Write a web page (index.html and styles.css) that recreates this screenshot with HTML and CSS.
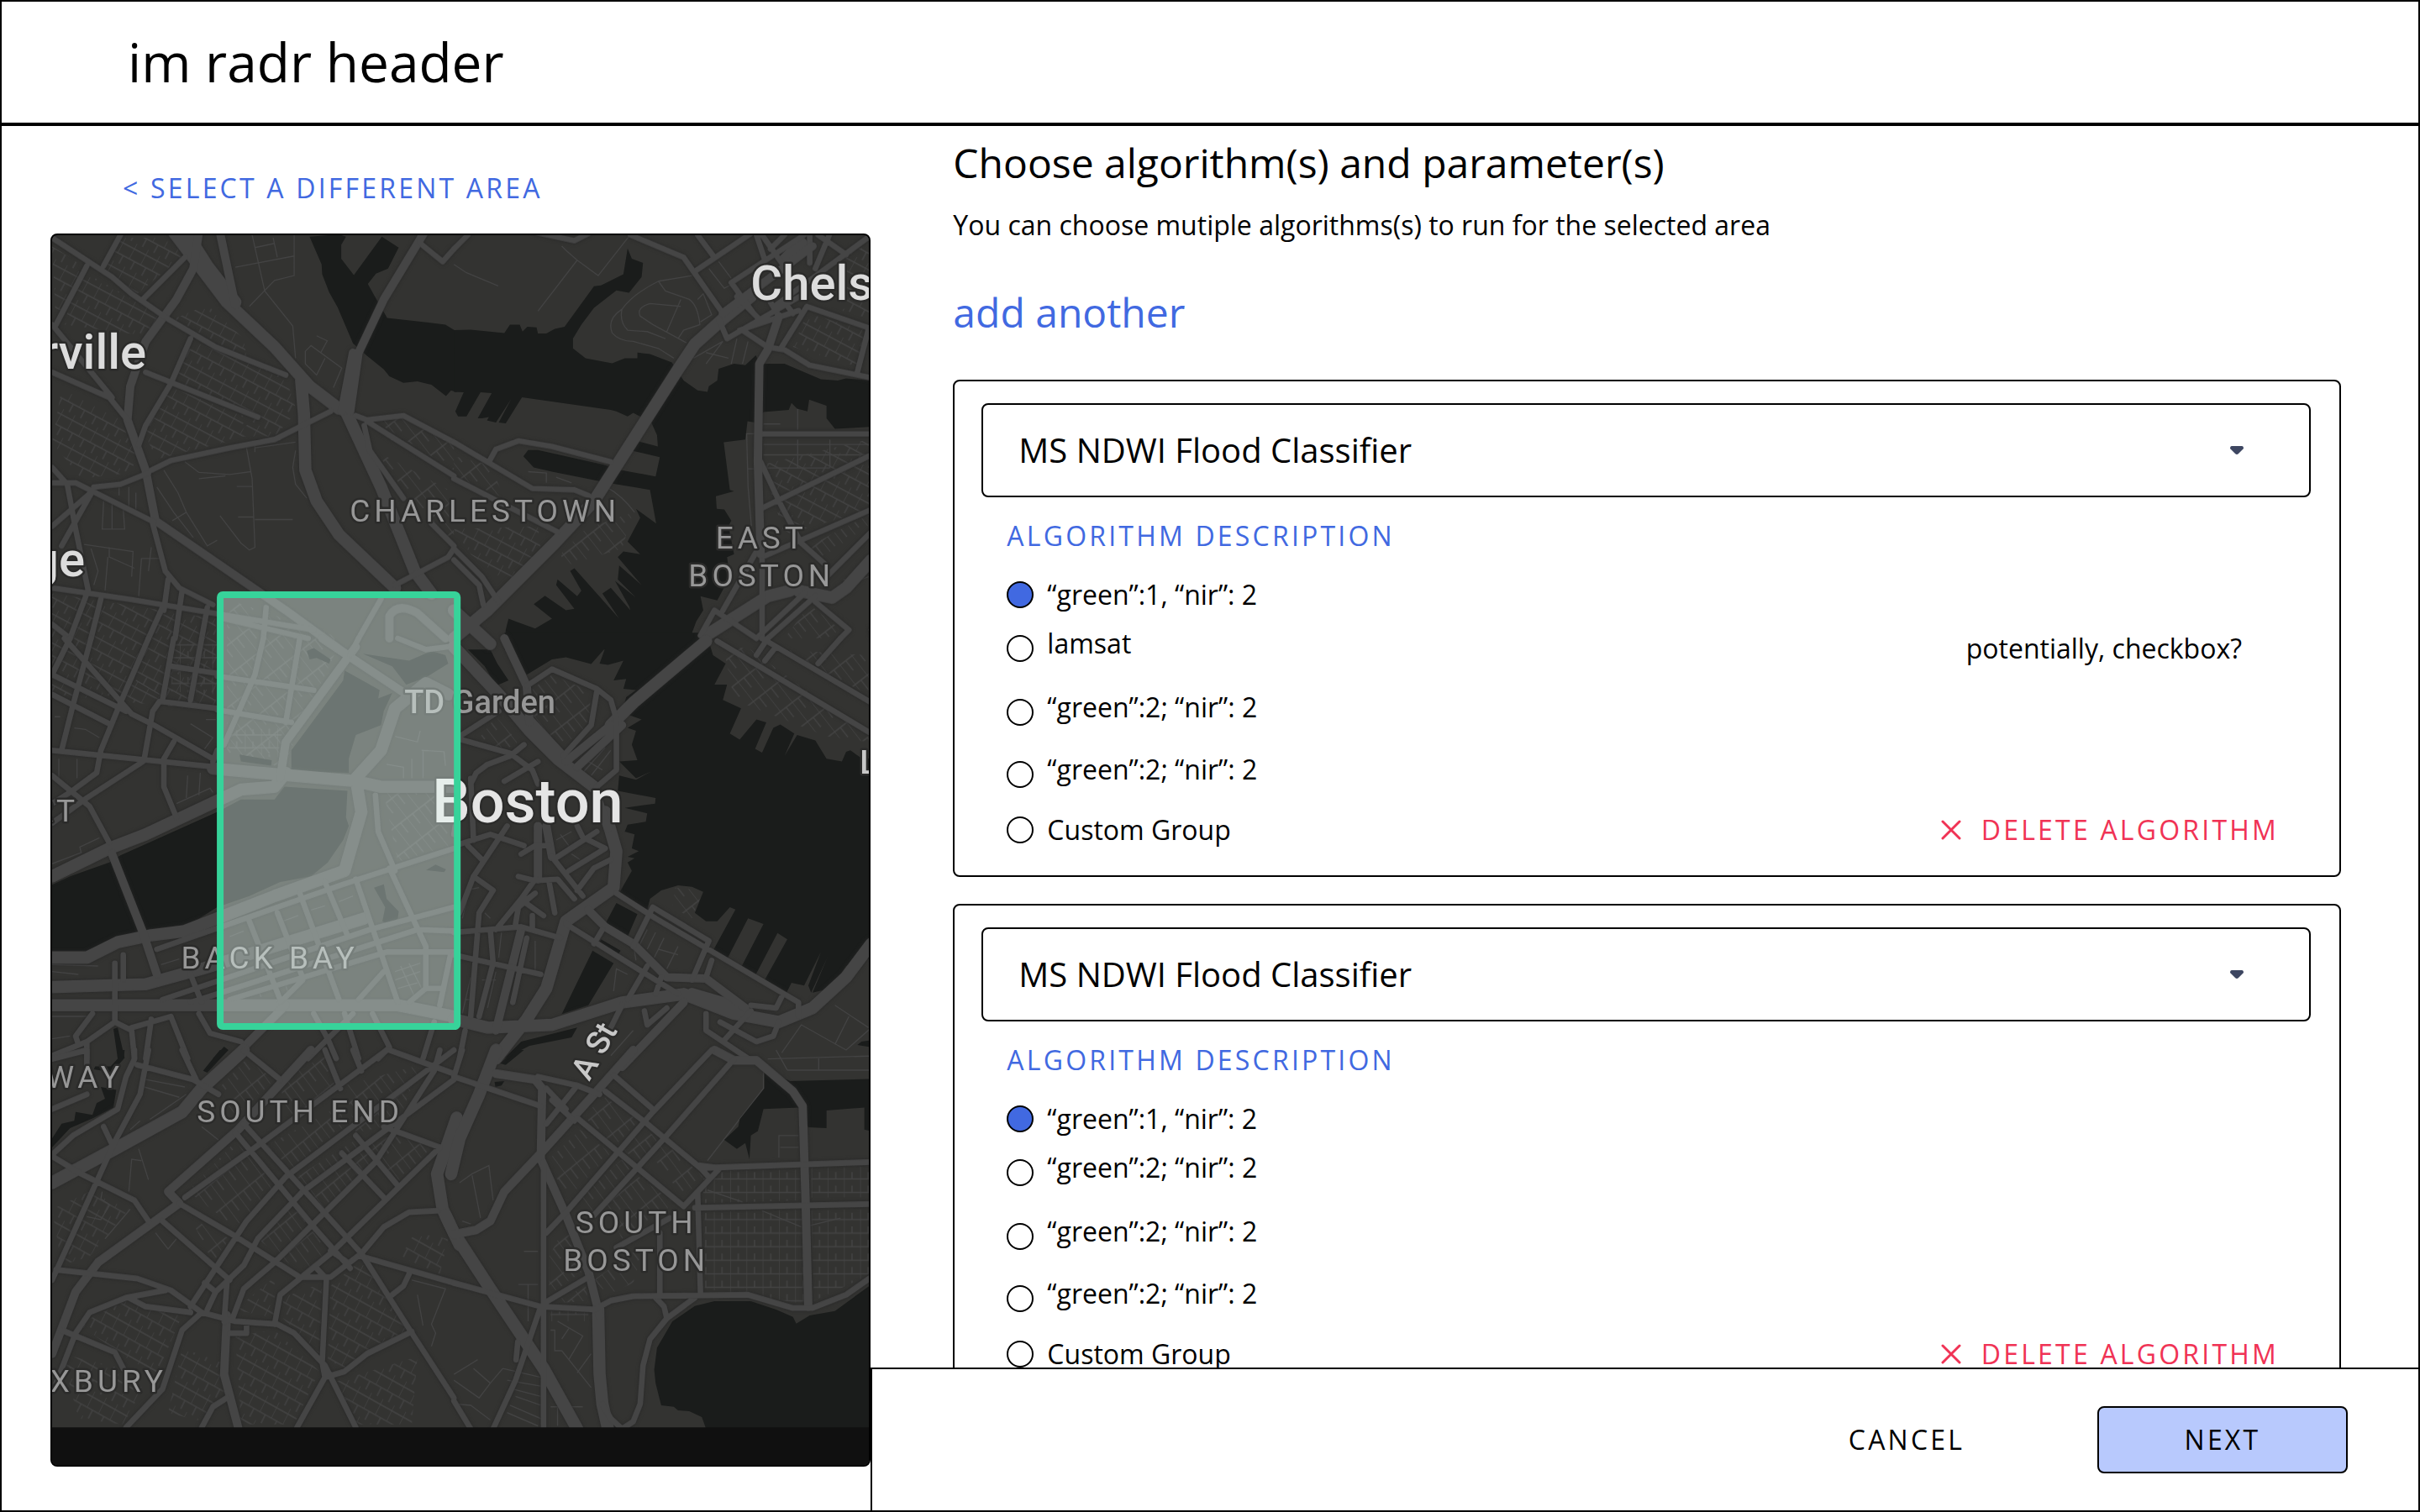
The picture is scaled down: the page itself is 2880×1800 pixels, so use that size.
FILE: index.html
```html
<!DOCTYPE html>
<html lang="en">
<head>
  <meta charset="UTF-8" />
  <meta name="viewport" content="width=device-width, initial-scale=1.0" />
  <title>im radr - choose algorithms</title>

  <link rel="stylesheet" href="styles.css">

</head>
<body>

<div class="page">
  <header class="header">
    <span class="header-title">im radr header</span>
  </header>

  <main class="main">
    <section class="area-panel">
      <a class="link back-link" href="#">&lt; SELECT A DIFFERENT AREA</a>

      <div class="map">
        <svg class="map-svg" viewBox="62 280 972 1464" preserveAspectRatio="xMidYMid slice" role="img" aria-label="Map of Boston with selected area">
          <defs>
            <pattern id="gridA" width="46" height="92" patternUnits="userSpaceOnUse" patternTransform="rotate(28)">
              <path class="minor" d="M0,0 V60 M0,60 H46 M23,60 V92 M0,20 H46" />
            </pattern>
            <pattern id="gridB" width="54" height="88" patternUnits="userSpaceOnUse" patternTransform="rotate(-38)">
              <path class="minor" d="M0,0 V88 M0,44 H54 M27,44 V88" />
            </pattern>
            <pattern id="gridC" width="58" height="46" patternUnits="userSpaceOnUse">
              <path class="minor" d="M0,0 V46 M0,23 H58 M29,0 V23" />
            </pattern>
          </defs>

          <rect class="land" x="62" y="280" width="972" height="1464" />

          <!-- side streets -->
          <g class="streets">
            <g transform="translate(40 260) scale(.3333)">
              <path fill="url(#gridA)" d="M66,100 L190,180 L80,380 Z M160,180 L460,350 L400,420 L110,380 Z M310,70 L460,70 L540,130 L370,270 L250,180 Z M500,360 L620,310 L750,430 L760,500 Z M570,440 L900,570 L940,690 L860,780 L720,780 L800,700 L490,580 Z M480,600 L760,710 L720,790 L440,860 L390,760 Z M100,610 L310,720 L370,860 L340,910 L170,930 L66,800 Z M66,1340 L650,1430 L650,1760 L66,1700 Z" />
              <path fill="url(#gridB)" d="M1210,720 L1330,710 L1500,810 L1500,900 Z M1220,830 L1500,980 L1500,1150 L1400,1080 Z M690,1360 L1100,1500 L890,1960 L690,1920 Z M1250,2050 L1480,2050 L1490,2240 L1300,2300 Z" />
              <path class="minor" d="M720,175 L930,135 M930,60 V205 L860,222 L770,315 M780,60 L825,260 L925,385 L935,500 M790,105 L860,90 M855,70 L870,140 M970,475 L990,455 L1100,535 L1070,605 M970,475 V520 L1010,560 L1040,500 M1010,420 L1048,438 L1025,480" />
              <path class="minor" d="M540,870 L590,908 L700,915 L775,905 M590,930 L685,920 M760,820 L780,930 L790,1175 L770,1185 L740,1160 L665,1062 M725,958 H780 M730,1067 H785 M790,1076 H925 M465,900 L515,980 L545,1050 L620,1170 L655,1150 M440,960 L500,1050 L570,1140 M545,1050 L495,1080 M790,820 L935,800 M790,835 V800" />
              <path class="minor" d="M180,1165 L355,1190 L350,1280 M270,1175 V1210 L360,1250 M265,1210 L255,1330 M205,1180 L230,1260 L215,1310 M420,1175 L410,1260 M385,1215 H450 M385,1215 L375,1350 M250,1010 L245,1110 L325,1110 L320,1040 M280,1010 V1110 M305,940 V990 M340,960 V1030 M365,980 V1040 M935,830 L925,890 L935,950 L975,1000" />
            </g>
            <g transform="translate(540 260) scale(.3333)">
              <path fill="url(#gridA)" d="M1260,340 L1470,400 L1440,530 L1210,460 Z M1100,880 L1480,790 L1490,1040 L1180,1130 Z M0,1110 L300,1100 L310,1180 L200,1310 L60,1200 Z M1380,120 L1490,100 L1490,360 L1380,330 Z" />
              <path fill="url(#gridB)" d="M380,1200 L470,1110 L640,1050 L600,1180 L400,1240 Z M1250,1180 L1480,1060 L1490,1090 L1300,1220 Z M1180,1500 L1270,1380 L1380,1470 L1330,1500 Z M0,850 L130,880 L180,1000 L0,920 Z" />
              <path class="minor" d="M385,100 L400,115 L440,150 L515,205 L625,65 M440,150 L300,332 M0,165 L45,195 L158,242 M600,325 Q640,270 730,225 L850,205 M730,225 L755,260 L840,290 Q870,310 878,380 L820,400 L800,430 M600,325 Q590,370 620,400 L690,405 L755,430 M600,325 Q545,360 565,410 Q590,440 640,440 L730,465 L785,500 M810,290 L760,405 M810,315 L700,305 Q650,320 665,350 L710,380 L830,445 M855,500 L960,440 L900,520 M900,480 L980,500 M1010,430 L990,520 M1050,440 L1030,520 M910,180 L965,250 L985,240 M945,155 L990,215 M870,290 L890,270 L920,345 L880,370" />
              <path class="minor" d="M1105,735 H1165 M1227,680 V755 M1227,790 V890 M1342,790 V890 M1105,808 H1490 M1105,845 H1490 M1105,892 H1342 M1040,770 H1075 M1045,770 L1050,960 L1062,1100 M1048,895 H1070 M265,905 L330,910 V945 M365,925 L420,945 M545,960 Q600,990 645,1050 M1390,1290 Q1440,1300 1480,1280" />
            </g>
            <g transform="translate(40 760) scale(.3333)">
              <path fill="url(#gridC)" d="M500,20 L655,20 L655,200 L490,190 Z M690,330 L890,320 L870,430 L690,390 Z" />
              <path class="minor" d="M75,280 H95 M90,430 V510 M155,430 V500 M145,320 L185,325 L235,355 M560,305 L640,355 L610,395 M615,290 H650 M365,150 L450,200 M550,490 L545,570 M595,480 L590,560 M510,590 L630,535 L640,550 M66,805 L170,765 L165,745 L235,712 M605,970 L640,940 L720,915 L880,855 L960,830 L1035,770 M1290,350 L1370,370 L1380,330 M1390,400 V500 M1385,400 L1465,405 L1470,455 M1260,450 L1320,460 V500 M1350,430 V500" />
              <path class="minor" d="M890,1010 L945,990 M990,970 L1040,955 M1090,940 L1140,920 M700,1065 L750,1045 M455,1165 L520,1145 M800,1250 L812,1280 M900,1240 L910,1270 M1290,1190 L1380,1160 M1290,1220 L1380,1190 M1300,1250 L1370,1230 M1310,1170 L1360,1280 M1340,1160 L1385,1250 M66,1165 L230,1170 M66,1190 L160,1200 M66,1350 L200,1350 M66,1430 L130,1420" />
            </g>
            <g transform="translate(540 760) scale(.3333)">
              <path fill="url(#gridB)" d="M280,180 L350,130 L490,190 L480,310 L370,400 L280,320 Z M960,20 L1060,40 L1480,350 L1480,370 L1330,350 L1000,220 Z M80,370 L150,280 L230,370 L180,400 Z M1150,40 L1480,60 L1480,200 Z M790,890 L890,900 L850,1000 L780,960 Z" />
              <path class="minor" d="M460,480 L540,390 M490,490 L560,400 M480,440 L530,470 M380,700 L410,740 M365,720 L420,690 M420,770 L450,790 M650,1150 L640,1090 M690,1040 L660,1100 M720,1050 L690,1110 M750,1070 L715,1140 M800,1100 L760,1180 M730,1110 L800,1130 M60,880 L30,1000 M40,900 L90,890 M110,980 L130,1000 M170,1050 L160,1140 M290,1080 V1190 M60,1210 L30,1340 M150,1190 L120,1320 M100,1220 H150 M40,1290 H60 M570,1260 L580,1180 L620,1200 M560,1490 L640,1400 M1170,1480 L1240,1380 L1400,1470 L1490,1390 M1360,1310 L1480,1390 M1410,1350 L1360,1450" />
            </g>
            <g transform="translate(40 1250) scale(.3333 .3508)">
              <path fill="url(#gridB)" d="M660,130 L760,30 L860,100 L720,230 Z M880,100 L1040,20 L1080,130 L900,240 Z M820,330 L1090,190 L1110,260 L930,400 Z M940,430 L1140,310 L1230,380 L1040,540 Z M1110,120 L1380,50 L1300,250 L1150,280 Z M550,480 L720,310 L870,460 L720,600 Z M800,640 L930,520 L1050,680 L960,760 Z M1170,310 L1310,290 L1420,330 L1300,450 Z M560,570 L700,640 L640,720 Z" />
              <path fill="url(#gridA)" d="M66,540 L200,480 L340,540 L200,700 L100,730 Z M160,930 L330,850 L530,900 L440,1100 L340,1050 Z M720,880 L860,770 L860,910 Z M890,840 L1030,790 L1020,1030 L890,910 Z M1060,800 L1170,710 L1340,950 L1110,1080 L1050,1050 Z M1310,700 L1360,620 L1480,640 L1450,760 Z M530,1010 L670,1060 L690,1170 L600,1260 L480,1230 Z M720,970 L860,950 L1020,1090 L930,1270 L740,1270 Z M1060,1130 L1370,1040 L1350,1270 L1150,1270 Z M100,1030 L310,1080 L400,1130 L320,1270 L160,1250 Z" />
              <path class="minor" d="M340,480 L350,370 L385,375 M375,335 L410,440 M435,620 L480,675 L510,640 M245,480 L240,505 L272,525 L240,575 L190,565 M345,540 L255,640 M400,100 L540,125 M395,125 L520,160 M415,235 L545,150 M345,270 L380,240 M1350,780 L1470,810 L1420,930 L1435,960 L1420,1005 M1370,830 L1390,935 M600,260 L660,305" />
            </g>
            <g transform="translate(540 1250) scale(.3333 .3508)">
              <path fill="url(#gridC)" d="M890,410 L1235,405 L1240,510 L890,520 Z M895,550 L1245,540 L1250,860 L895,810 Z M1275,400 L1490,395 V500 H1275 Z M1275,545 L1490,540 V760 L1285,850 Z M345,885 L480,890 V920 H345 Z" />
              <path fill="url(#gridB)" d="M460,220 L540,160 L660,240 L570,330 Z M340,370 L450,270 L560,350 L400,510 Z M440,510 L600,370 L640,420 L500,560 Z M540,520 L660,430 L790,520 L600,640 Z M700,350 L750,310 L890,430 L820,500 Z M340,700 L400,590 L460,750 L340,830 Z M500,780 L680,660 L640,790 L550,830 Z M600,330 L680,270 L730,300 L660,390 Z M345,860 L470,800 L480,850 Z" />
              <path class="minor" d="M20,450 L65,420 L125,392 L140,510 M65,425 L95,570 M30,580 L60,590 M250,683 H300 M230,795 H300 M265,795 V920 M345,950 H360 V1020 H385 M370,920 L460,970 L410,1050 M385,1020 L490,1145 M385,980 L410,945 M440,1095 L490,1030 M0,1100 L85,1050 M0,1120 L90,1180 L130,1130 L70,1080 M175,1080 L130,1130 M175,1080 L310,1110 M190,1120 L310,1140 M210,1150 L310,1175 M220,1175 L310,1205 M200,1205 L310,1250 M190,1230 L300,1275 M0,1200 L60,1205 L130,1255 M370,1210 V1275 M345,1210 H460 M1105,75 V130 L905,375 M1160,365 V290 H1230 M1165,330 H1230 M1120,30 L1490,20 M1190,68 H1490 M1302,25 V68 M1150,0 L1190,68 M905,475 L1030,515 M1100,545 L1240,600 M1250,600 L1380,570" />
            </g>
          </g>

          <!-- water -->
          <g class="water">
            <path transform="translate(40 260) scale(.3333)" d="M985,66 L1090,58 L1115,66 L1098,95 V145 L1143,203 L1243,66 L1303,105 L1265,180 L1222,198 L1193,235 L1218,280 L1262,356 L1470,380 L1510,405 V622 L1490,615 L1472,635 L1420,595 L1370,583 L1320,588 L1270,565 L1250,540 L1188,490 L1140,447 L1085,318 L1055,265 L1030,200 L1028,165 Z" />
            <path transform="translate(540 260) scale(.3333)" d="M0,400 L60,398 L180,410 L200,380 H235 L245,405 L262,388 L295,390 L300,412 H330 L360,395 L395,388 L500,243 L525,240 L605,200 L620,108 L635,145 L675,160 L670,210 L625,266 L580,258 L500,320 L455,380 L425,430 V465 L470,500 L565,518 L610,500 H655 V480 L700,485 L778,515 L820,580 L870,615 L905,620 L910,600 L940,580 L945,538 L1000,520 L1040,525 L1078,490 L1090,520 H1180 L1310,575 L1370,580 L1400,572 L1490,580 V745 L1360,752 L1330,715 V670 L1268,648 L1262,690 L1225,680 L1205,660 L1195,685 L1105,692 L1075,730 L1048,725 L1040,790 L963,800 L985,970 L1000,975 L935,993 L938,1038 L965,1040 L990,1080 L980,1100 L1000,1200 L975,1210 L985,1280 L940,1365 L880,1350 L890,1400 L865,1440 L850,1480 L900,1540 H180 L185,1470 L195,1430 L220,1440 L290,1465 L350,1430 L285,1378 L325,1348 L400,1400 L430,1395 L365,1310 L370,1290 L440,1350 L455,1330 L415,1260 L430,1250 L590,1430 L530,1340 L560,1320 L630,1400 L625,1385 L575,1295 L650,1355 L585,1290 L590,1240 L670,1310 L585,1210 L605,1190 L665,1200 L620,1155 L665,1070 L650,1038 L722,1090 L700,970 L580,950 L500,935 L350,905 L285,890 L248,850 L265,828 L300,828 L535,880 L590,898 L720,922 L735,853 L635,830 L650,795 L728,815 L725,775 L705,730 L640,695 L620,708 L580,690 L560,685 L243,640 L185,733 L160,730 L205,645 L150,730 L118,722 L125,710 L100,715 L85,715 L135,625 L95,622 L45,708 L15,708 L5,690 L35,622 L0,620 Z" />
            <path transform="translate(40 760) scale(.3333)" d="M66,880 L130,850 L270,800 L310,775 L655,620 L740,575 H860 L895,530 L1120,545 L1115,640 L1125,670 L1105,720 L1050,800 L990,850 L880,870 L770,920 L655,960 L560,1020 L400,1045 L290,1075 L190,1115 H66 Z M920,400 L1105,150 L1110,115 L1235,185 L1230,215 L1280,195 L1250,260 L1240,310 L1150,345 L1125,430 V480 L920,475 Z M1175,55 L1280,100 L1330,165 L1400,140 L1480,90 L1470,60 L1420,45 L1340,80 Z M975,45 L1000,35 L1060,75 L1055,90 L1010,70 L985,75 Z M735,415 L850,435 L848,455 L740,440 Z M1215,890 L1250,878 L1260,930 L1303,975 L1300,1000 L1275,1025 L1245,1010 L1255,960 Z M1400,828 L1435,808 L1472,825 L1465,835 Z M285,1395 L300,1390 L325,1500 H300 Z M640,1500 L680,1458 L695,1470 L665,1500 Z" />
            <path transform="translate(540 760) scale(.3333)" d="M180,-20 L260,130 L350,75 L400,68 L490,92 L540,35 L520,90 L550,95 L605,80 L570,150 L615,145 L605,180 L650,185 L615,210 L600,265 L670,290 L620,320 L650,330 L635,380 L655,435 L590,440 L650,500 L705,475 L650,505 L590,490 L585,545 L720,570 L718,590 L610,605 L690,625 L685,655 L620,665 L610,690 L645,700 L635,750 L660,760 L620,780 L645,785 L620,800 L635,830 L590,910 L690,970 L700,930 L740,900 L800,882 L850,887 L890,905 L860,980 L900,1010 L940,1010 L985,960 L1005,968 L925,1115 L970,1155 L1050,1000 L1105,1020 L1020,1185 L1075,1205 L1155,1052 L1190,1075 L1105,1228 L1185,1270 L1205,1230 L1250,1240 L1310,1120 L1265,1240 L1275,1265 L1335,1135 L1280,1265 L1345,1250 L1400,1170 L1490,1140 V430 L1450,425 L1415,400 L1400,405 L1385,440 L1330,430 L1290,365 L1225,345 L1180,420 L1215,340 L1165,308 L1140,320 L1100,408 L1075,395 L1115,300 L1080,290 L1020,362 L985,340 L1025,250 L960,220 L975,165 L930,165 L970,90 L925,60 L900,-20 Z M50,40 H130 L155,90 L195,150 L150,170 L110,100 Z M580,945 L655,985 L620,1065 L540,1020 Z M525,1075 L595,1115 L585,1130 L515,1095 Z M495,1115 L570,1160 L480,1310 L385,1342 Z M240,1440 L440,1390 L420,1425 L270,1455 L180,1500 Z M1490,1435 V1460 L1440,1452 L1455,1440 Z" />
            <path transform="translate(40 1250) scale(.3333 .3508)" d="M605,70 L665,0 H695 L620,77 Z M305,0 H325 L322,30 L280,75 L215,65 L220,55 L275,55 L300,30 Z M240,125 L295,135 L285,195 L215,230 L130,265 L66,330 V300 L100,250 L145,240 L150,210 L180,215 L210,220 L225,180 L255,165 Z" />
            <path transform="translate(540 1250) scale(.3333 .3508)" d="M250,0 L185,50 L165,45 L215,0 Z M145,108 L180,105 L170,120 L148,125 Z M1108,75 L1130,75 L1200,105 L1490,98 V275 L1465,270 V195 L1330,205 V265 L1265,262 L1230,195 L1105,200 L1085,275 L1060,290 L1055,370 L1040,315 L1010,335 L965,305 L1015,260 L1020,235 L1108,130 Z M900,1285 L885,1245 L840,1225 L800,1222 L785,1210 L740,1205 L720,1130 L715,1085 L725,1010 L780,920 L860,868 L930,852 H1060 L1150,880 L1210,905 L1222,928 L1270,900 L1360,885 L1490,795 V1285 Z" />
          </g>

          <!-- main roads -->
          <g class="roads">
            <g transform="translate(40 260) scale(.3333)">
              <path class="r1" d="M500,50 L690,300 L860,460 L985,600 L1090,680 M550,60 L620,170 L720,300 M1110,680 L1240,960 L1360,1260 L1420,1340 M955,580 L965,700 L970,900 L1010,1010 L1090,1130 L1290,1320" />
              <path class="r2" d="M590,50 L570,180 L510,290 L400,440 L345,600 L335,720 L400,900 L435,1080 L900,1400 L1120,1560 M1395,50 L1250,290 L1160,480 L1130,690 M1140,480 L1100,690 M665,50 L705,240 L720,310" />
              <path class="r3" d="M66,70 L280,210 L350,270 L480,360 L650,460 L900,560 M66,550 L270,640 L335,720 M400,550 L800,710 M560,430 L490,590 L400,740 L375,810 M540,140 L390,290 M310,60 L250,170 M190,170 L80,380 M66,380 L280,640 M420,900 L490,865 L700,820 L860,790 L1060,690 M66,945 H150 L430,1085 M215,960 L310,950 L410,910 M66,890 L120,950 L150,1110 L195,1330 M66,1100 L210,975 L100,1170 M425,1090 L470,1260 L520,1320 L640,1380 M66,1320 L340,1360 L1000,1470 M480,1290 L465,1400 M530,1330 L505,1500 M620,1390 L600,1500 M240,1360 L205,1500 M190,1340 L130,1500 M460,1390 L410,1500 M66,1450 L130,1500 M1150,705 L1190,720 L1320,705 L1500,800 M1190,725 L1500,920 M1180,740 L1200,830 L1320,1000 M1290,1310 L1480,1210 L1500,1180 M1420,1090 L1500,1170 M1380,60 L1380,90 L1460,155 L1500,110 M680,1430 L980,1500 M830,1390 L820,1500 M1240,1360 L1160,1500" />
              <path class="r2" d="M1270,1500 V1420 Q1300,1370 1370,1410 L1470,1500" />
            </g>
            <g transform="translate(540 260) scale(.3333)">
              <path class="r1" d="M1240,90 L1180,150 M1060,280 L960,360 L860,450 L800,540 L500,1010 L360,1160 L120,1400 L0,1500 M0,1400 L130,1520 M900,1490 L1120,1350 L1200,1330 M1230,1330 L1350,1355 L1400,1320 L1490,1220" />
              <path class="r3" d="M0,110 L50,60 M290,50 L430,80 L480,55 M630,60 L820,140 L960,340 M870,60 L930,140 M860,190 L1060,55 M1080,60 L1110,150 M1100,60 L1170,160 M1180,60 L1130,110 M990,230 L1250,60 M990,230 L1070,340 M1490,60 L1150,310 M1300,60 L1400,130 M1340,60 L1290,180 M1270,60 V160 M1010,280 L1060,330 L1090,360 M945,360 L975,430 L1250,270 M1020,400 L1230,330 M1130,300 L1160,350 M1180,300 L1210,340 M1030,400 L1120,460 L1180,470 L1270,525 L1490,570 M1170,460 L1260,315 L1490,395 M1480,395 L1440,550 M1095,770 H1490 M1095,870 L1170,1030 L1240,1160 L1330,1240 M1090,1040 L1490,845 M1100,1210 L1490,1040 M0,800 L280,965 L430,970 L480,990 M125,870 L150,825 L230,795 L350,815 L560,870 M0,930 L370,1120 M0,1180 L100,1280 L160,1370 M0,1220 L90,1310 L105,1380 M1290,1370 L1410,1470 L1380,1500 M1290,1350 L1120,1500 M1250,1340 L1080,1500 M1080,1190 L960,1400 M1100,1200 V1500 M1490,1470 L1500,1500 M930,1400 L880,1490 M930,1400 L1080,1500 M1330,1280 L1490,1120" />
              <path class="r2" d="M1160,350 L1120,470 L1090,520 L1085,870 L1095,1200 M1280,100 L960,340" />
            </g>
            <g transform="translate(40 760) scale(.3333)">
              <path class="r1" d="M66,850 L270,750 L400,700 L655,580 L740,540 L860,530 L900,480 M640,465 L1150,510 L1240,530 H1500 M66,1140 H190 L300,1085 L420,1060 L540,1045 L860,920 L1110,830 L1170,620 L1150,500 L1240,400 L1290,250 L1400,160 L1480,200 M66,1245 L400,1235 L600,1180 L1180,1000 M66,1310 H1300 L1500,1350" />
              <path class="r2" d="M1150,30 L900,370 L880,500 M1030,0 L1330,200 M900,1310 L640,1570 M280,770 L390,1050 L440,1200" />
              <path class="r3" d="M110,0 L350,270 L430,310 L640,430 M66,130 L330,260 M66,200 L270,305 M130,0 L66,130 M410,0 L310,230 L240,400 L225,480 L130,550 L66,590 M205,0 L140,240 L100,400 M66,400 L655,460 M390,440 L190,570 L66,660 M66,490 L200,600 L270,730 M500,0 L460,220 M600,0 L560,220 M495,100 L655,125 M655,250 L450,225 L425,260 L395,430 M500,370 L465,430 V530 L510,640 M655,400 L640,440 M950,0 L900,300 M820,0 L790,130 L680,380 M655,135 L1000,185 M655,255 L920,300 M1160,0 L1130,60 M1300,0 L1400,40 L1480,30" />
              <path class="r3" d="M440,1110 L1100,880 L1500,750 M460,1290 L1200,1040 L1500,960 M560,1300 L1370,1040 L1500,1045 M700,1290 L1260,1120 L1500,1120 M770,1010 L880,1290 M870,980 L960,1210 M950,910 L1090,1290 M1150,860 L1300,1300 M1040,870 L1120,1060 M560,1200 L600,1300 M1270,820 L1400,1100 V1250 L1340,1300 M1400,1250 H1460 M1220,560 L1230,690 L1290,830 M1490,1120 L1450,1310 M960,1220 L880,1300 M1250,1190 L1160,1290 M210,1340 L150,1420 L160,1450 M66,1490 L190,1440 L290,1370 L350,1400 L360,1500 M290,1160 V1370 M320,1130 V1220 M190,1440 V1500 M350,1390 L490,1350 L550,1500 M590,1340 L630,1410 L740,1440 M420,1360 L400,1500 M1000,1340 L1050,1430 L1080,1500 M1110,1340 L1160,1500 M1210,1340 L1270,1460 L1230,1500 M980,1500 L1140,1340 M1430,1370 L1390,1500" />
            </g>
            <g transform="translate(540 760) scale(.3333)">
              <path class="r1" d="M0,30 L160,200 L270,330 L370,430 L500,530 M540,620 L580,760 L570,890 L400,1010 L330,1250 L260,1360 L150,1500 M900,10 L640,230 L560,310 M0,1360 L120,1390 L350,1380 L600,1300 L820,1270 L1000,1340 L1160,1370 L1280,1320 L1400,1210 L1490,1090 M850,1270 L1020,1320 M270,300 L400,440" />
              <path class="r2" d="M180,0 L260,170 L270,300 M500,530 L550,680 M560,310 L400,440 M600,310 L440,460 M480,970 L540,1030 L640,1090 L760,1210 L900,1215 L1040,1320 M820,1300 L600,1530 M240,1040 L200,1200 L150,1400 M300,670 V860 M330,670 L350,780" />
              <path class="r3" d="M260,170 L350,110 L510,180 L560,220 L580,290 V470 L510,530 M510,190 L490,310 L390,420 M20,350 L160,260 M20,360 L200,410 L280,470 L300,520 M60,520 L80,480 L120,450 L200,420 L250,380 M180,510 L300,440 M60,500 L70,720 M20,735 L130,700 L250,740 M20,570 L0,700 M50,740 L100,790 M190,670 L70,850 L140,900 L90,980 L60,1350 M290,860 L240,930 L150,1040 M350,780 L460,920 M240,770 L290,740 H340 M370,780 L510,690 M230,850 L290,865 L370,860 L430,930 M410,830 L540,750 M440,900 L500,820 L560,790 M440,670 L460,710 L540,750 M340,870 L360,980 M220,1020 L230,960 L290,910 L250,940 L320,990 M0,1050 L240,1030 L380,1070 M0,1130 L310,1200 M280,990 V1040 M130,1040 L140,1160 L90,1350 M260,1070 L210,1300 M70,850 L20,980 M40,1400 L20,1500 M580,910 L720,1000 L1230,1300 L1230,1350 M400,1020 L640,1170 L800,1270 M640,1100 L710,960 L910,1080 L850,1220 M530,1040 L500,1090 M690,1170 L620,1290 M740,1210 L720,1270 M920,1150 L900,1210 M900,1340 V1400 L1050,1500 M960,1440 L1060,1330 M560,1390 L600,1310 M680,1330 L690,1380 L760,1320 M1160,1370 L1140,1420 L1080,1440 L950,1370 M1060,1310 L1150,1320 L1170,1280 M940,10 L1490,340 M1100,0 L1490,230 M1080,60 L1120,0 M1110,80 L1150,30 M1300,90 L1380,0" />
            </g>
            <g transform="translate(40 1250) scale(.3333 .3508)">
              <path class="r1" d="M750,0 L600,130 L530,210 L300,330 L66,450 M1510,230 L1440,420 L1460,540 L1520,660" />
              <path class="r2" d="M990,0 L730,270 L480,480 L520,520 L230,720 L150,820 L66,1030 M690,900 L680,1100 L730,1280" />
              <path class="r3" d="M66,30 L190,0 M190,0 V50 M66,200 L190,150 M60,360 L140,290 L300,200 L330,90 L360,30 V0 M410,0 L380,150 L290,310 L66,780 M530,0 L580,100 M370,50 L570,100 L660,150 M250,260 L280,320 M66,360 L170,420 L360,510 L410,580 M750,0 L880,100 M1040,0 L1095,130 M1140,0 L1170,70 M1260,0 L820,310 L540,500 M720,280 L1000,600 L1130,740 M1150,290 L1300,460 M1100,350 L1250,500 M1500,0 L900,430 L760,580 L560,870 M1500,100 L960,480 L800,640 L750,730 L650,820 L620,880 M1450,0 L1430,70 L1220,380 L860,720 L750,810 L710,910 M1450,330 L1060,690 L880,830 L860,930 M1270,0 L1500,80 M1250,260 L1450,330 M520,520 L700,620 L950,770 H1060 L1170,690 L1250,600 L1340,550 L1440,545 M460,580 L700,780 M610,790 L650,820 M80,745 L370,775 L490,815 L600,890 L720,920 L870,930 L930,960 L1040,1070 L1150,1280 M150,960 L200,890 L330,840 L470,815 M340,840 L400,870 L560,890 M100,950 L290,1025 L320,1080 M150,960 L80,1130 M600,890 L530,950 L460,1150 L330,1280 M690,790 L680,920 M700,960 H760 V930 M690,1180 L640,1210 L600,1280 M1045,780 L1030,1060 L1040,1110 L1110,1090 L1190,1030 L1350,955 M1040,1110 L940,1280 M1170,700 L1500,790 M1340,760 L1320,800 L1280,830 M1010,740 L1040,770 M1060,680 L1120,720" />
              <path class="r3" d="M750,250 L1170,690 L1350,960 L1500,1180" />
            </g>
            <g transform="translate(540 1250) scale(.3333 .3508)">
              <path class="r1" d="M150,0 L90,150 L20,300 L-10,420 M-30,560 L0,620 L130,810 L320,1080 L440,1285 M515,880 L520,1100 L530,1200 L550,1285" />
              <path class="r2" d="M150,80 L290,100 L315,130 L310,370 L400,560 L480,750 L520,900 M640,0 L500,150 L310,350 L180,480 L130,580 L80,610 L0,625 M930,0 L1000,35 H1080 L1210,140 L1245,190 L1255,500 L1265,870" />
              <path class="r3" d="M30,0 L0,90 L310,190 M300,90 L440,120 L520,150 M540,140 L690,250 L880,400 L1490,380 M570,85 L710,200 M920,0 L710,210 L400,550 L330,620 M1000,30 L750,300 L500,560 M440,230 L820,530 L870,480 L950,400 L870,390 L910,430 M860,535 L1490,522 M870,480 L880,820 M735,620 V830 M770,570 L580,670 M0,790 L310,870 L500,880 L560,850 L640,835 L1050,830 L1210,875 H1280 L1400,830 L1490,770 M320,380 V1280 M320,860 L480,770 M310,870 L220,1120 L140,1285 M228,990 L222,1050 M720,840 L750,870 L760,910 L860,840 M760,910 L700,980 L675,1070 L665,1200 L640,1260 L600,1285 L560,1250 L530,1200 M0,1190 L60,1285 M330,130 L400,200 M330,250 L440,120 M350,170 L430,240" />
            </g>
          </g>

          <g class="labels">
            <text class="city" x="893" y="357">Chels</text>
            <text class="city end" x="174" y="439">rville</text>
            <text class="city end" x="101" y="686">ge</text>
            <text class="capital" x="514" y="979">Boston</text>
            <text class="place" x="481" y="849">TD Garden</text>
            <text class="place bright" x="1023" y="921">L</text>
            <text class="place bright" transform="translate(701 1288) rotate(-61)">A St</text>
            <text class="district mid" x="577" y="621">CHARLESTOWN</text>
            <text class="district mid" x="906" y="653">EAST</text>
            <text class="district mid" x="906" y="698">BOSTON</text>
            <text class="district mid" x="321" y="1153">BACK BAY</text>
            <text class="district end" x="94" y="978">RT</text>
            <text class="district end" x="147" y="1295">WAY</text>
            <text class="district mid" x="357" y="1336">SOUTH END</text>
            <text class="district mid" x="757" y="1468">SOUTH</text>
            <text class="district mid" x="757" y="1513">BOSTON</text>
            <text class="district end" x="199" y="1657">XBURY</text>
          </g>

          <rect class="attribution" x="62" y="1699" width="972" height="45" />
          <rect class="selection" x="262" y="708" width="282" height="514" rx="3" />
        </svg>
      </div>
    </section>

    <section class="setup-panel">
      <div class="setup-content">
        <h1 class="title">Choose algorithm(s) and parameter(s)</h1>
        <p class="subtitle">You can choose mutiple algorithms(s) to run for the selected area</p>
        <button class="add-button" type="button">add another</button>

        <div class="cards">
          <article class="card">
            <div class="select-wrap">
              <select class="select" aria-label="Algorithm">
                <option>MS NDWI Flood Classifier</option>
              </select>
              <svg class="caret" viewBox="0 0 16 12"><path d="M2,1 H14 Q16,1 16,4 L10,10 Q8,12 6,10 L0,4 Q0,1 2,1 Z" /></svg>
            </div>
            <div class="card-body">
              <a class="link" href="#">ALGORITHM DESCRIPTION</a>
              <div class="card-columns">
                <div class="options">
                  <label class="option"><input class="radio" type="radio" name="params-1" checked /><span>“green”:1, “nir”: 2</span></label>
                  <label class="option raised"><input class="radio" type="radio" name="params-1" /><span>lamsat</span></label>
                  <label class="option raised"><input class="radio" type="radio" name="params-1" /><span>“green”:2; “nir”: 2</span></label>
                  <label class="option raised"><input class="radio" type="radio" name="params-1" /><span>“green”:2; “nir”: 2</span></label>
                  <label class="option"><input class="radio" type="radio" name="params-1" /><span>Custom Group</span></label>
                </div>
                <div class="card-side">
                  <p class="note">potentially, checkbox?</p>
                  <button class="delete-button" type="button">
                    <svg class="cross" viewBox="0 0 24 24"><path d="M2,2 L22,22 M22,2 L2,22" /></svg>
                    DELETE ALGORITHM
                  </button>
                </div>
              </div>
            </div>
          </article>

          <article class="card">
            <div class="select-wrap">
              <select class="select" aria-label="Algorithm">
                <option>MS NDWI Flood Classifier</option>
              </select>
              <svg class="caret" viewBox="0 0 16 12"><path d="M2,1 H14 Q16,1 16,4 L10,10 Q8,12 6,10 L0,4 Q0,1 2,1 Z" /></svg>
            </div>
            <div class="card-body">
              <a class="link" href="#">ALGORITHM DESCRIPTION</a>
              <div class="card-columns">
                <div class="options">
                  <label class="option"><input class="radio" type="radio" name="params-2" checked /><span>“green”:1, “nir”: 2</span></label>
                  <label class="option raised"><input class="radio" type="radio" name="params-2" /><span>“green”:2; “nir”: 2</span></label>
                  <label class="option raised"><input class="radio" type="radio" name="params-2" /><span>“green”:2; “nir”: 2</span></label>
                  <label class="option raised"><input class="radio" type="radio" name="params-2" /><span>“green”:2; “nir”: 2</span></label>
                  <label class="option"><input class="radio" type="radio" name="params-2" /><span>Custom Group</span></label>
                </div>
                <div class="card-side">
                  <button class="delete-button" type="button">
                    <svg class="cross" viewBox="0 0 24 24"><path d="M2,2 L22,22 M22,2 L2,22" /></svg>
                    DELETE ALGORITHM
                  </button>
                </div>
              </div>
            </div>
          </article>
        </div>
      </div>

      <footer class="footer">
        <button class="button" type="button">CANCEL</button>
        <button class="button primary" type="button">NEXT</button>
      </footer>
    </section>
  </main>
</div>

</body>
</html>
```

FILE: styles.css
```css
* {
  box-sizing: border-box;
}

body {
  margin: 0;
  font-family: "Open Sans", "Noto Sans", sans-serif;
  font-size: 32px;
  line-height: 44px;
  color: #000;
  background-color: #fff;
}

button {
  padding: 0;
  border: none;
  background: none;
  font: inherit;
  color: inherit;
  cursor: pointer;
}

.page {
  display: flex;
  flex-direction: column;
  height: 100vh;
  border: 2px solid #000;
}

/* header */
.header {
  display: flex;
  align-items: center;
  padding: 28px 150px;
  border-bottom: 4px solid #000;
}

.header-title {
  font-size: 64px;
  line-height: 88px;
}

.main {
  display: flex;
  flex: 1;
  min-height: 0;
}

.link {
  color: #4169e1;
  letter-spacing: 0.1em;
  text-decoration: none;
}

/* map side */
.area-panel {
  display: flex;
  flex-direction: column;
  align-items: flex-start;
  gap: 32px;
  width: calc(36% - 1px);
  padding: 52px 0 52px 58px;
}

.back-link {
  margin-left: 86px;
}

.map {
  flex: 1;
  align-self: stretch;
  min-height: 0;
  border: 2px solid #000;
  border-radius: 8px;
  background-color: #101010;
  overflow: hidden;
}

.map-svg {
  display: block;
  width: 100%;
  height: 100%;
}

.land {
  fill: #333331;
}

.water {
  fill: #1a1c1b;
}

.attribution {
  fill: #101010;
}

.minor {
  fill: none;
  stroke: #434343;
  stroke-width: 4;
}

.roads {
  fill: none;
  stroke: #454545;
  stroke-linecap: round;
  stroke-linejoin: round;
  filter: drop-shadow(0 0 2px #262626);
}

.r1 {
  stroke-width: 44;
}

.r2 {
  stroke-width: 30;
}

.r3 {
  stroke-width: 20;
}

.labels {
  font-family: Roboto, sans-serif;
  stroke: #2b2b2a;
  stroke-width: 5px;
  stroke-linejoin: round;
  paint-order: stroke;
}

.city {
  font-size: 58px;
  font-weight: 500;
  fill: #dcdcdc;
}

.capital {
  font-size: 72px;
  font-weight: 500;
  fill: #e5e5e5;
}

.place {
  font-size: 38px;
  font-weight: 500;
  fill: #979797;
}

.bright {
  fill: #c8c8c8;
}

.district {
  font-size: 37px;
  letter-spacing: 5px;
  fill: #979797;
}

.mid {
  text-anchor: middle;
}

.end {
  text-anchor: end;
}

.selection {
  fill: rgba(232, 252, 245, 0.4);
  stroke: #37d39a;
  stroke-width: 8;
}

/* algorithm side */
.setup-panel {
  display: flex;
  flex: 1;
  flex-direction: column;
  min-width: 0;
}

.setup-content {
  flex: 1;
  min-height: 0;
  padding: 12px 92px 0 98px;
  overflow: hidden;
}

.title {
  margin: 0 0 20px;
  font-size: 48px;
  font-weight: 400;
  line-height: 64px;
}

.subtitle {
  margin: 0 0 50px;
}

.add-button {
  display: block;
  margin-bottom: 48px;
  font-size: 48px;
  line-height: 64px;
  color: #4169e1;
}

.cards {
  display: flex;
  flex-direction: column;
  gap: 32px;
}

.card {
  padding: 26px 34px 32px 32px;
  border: 2px solid #000;
  border-radius: 8px;
}

.select-wrap {
  position: relative;
  margin-bottom: 24px;
}

.select {
  display: block;
  width: 100%;
  height: 112px;
  padding: 0 100px 0 42px;
  border: 2px solid #000;
  border-radius: 8px;
  appearance: none;
  background-color: #fff;
  font: inherit;
  font-size: 40px;
  color: #000;
}

.caret {
  position: absolute;
  top: 50px;
  right: 80px;
  width: 16px;
  height: 12px;
  fill: #3d4661;
  pointer-events: none;
}

.card-body {
  padding: 0 38px 0 30px;
}

.card-columns {
  display: flex;
  justify-content: space-between;
  margin-top: 26px;
}

.options {
  display: grid;
  grid-template-rows: 58px 76px 74px 72px 44px;
  align-items: start;
}

.option {
  display: flex;
  align-items: center;
  gap: 16px;
}

.raised span {
  padding-bottom: 12px;
}

.radio {
  width: 32px;
  height: 32px;
  margin: 0;
  border: 2px solid #000;
  border-radius: 50%;
  appearance: none;
}

.radio:checked {
  background-color: #4169e1;
}

.card-side {
  display: flex;
  flex-direction: column;
  align-items: flex-end;
}

.note {
  margin: 64px 44px 0 0;
}

.delete-button {
  display: flex;
  align-items: center;
  gap: 24px;
  margin-top: auto;
  letter-spacing: 0.1em;
  color: #f03355;
}

.cross {
  width: 24px;
  height: 24px;
  fill: none;
  stroke: currentColor;
  stroke-width: 3;
  stroke-linecap: round;
}

/* footer */
.footer {
  display: flex;
  align-items: center;
  justify-content: flex-end;
  gap: 78px;
  height: 170px;
  padding-right: 84px;
  border-top: 2px solid #000;
  border-left: 2px solid #000;
}

.button {
  width: 298px;
  height: 80px;
  letter-spacing: 0.1em;
}

.primary {
  border: 2px solid #000;
  border-radius: 8px;
  background-color: #b8c9fd;
}
```
